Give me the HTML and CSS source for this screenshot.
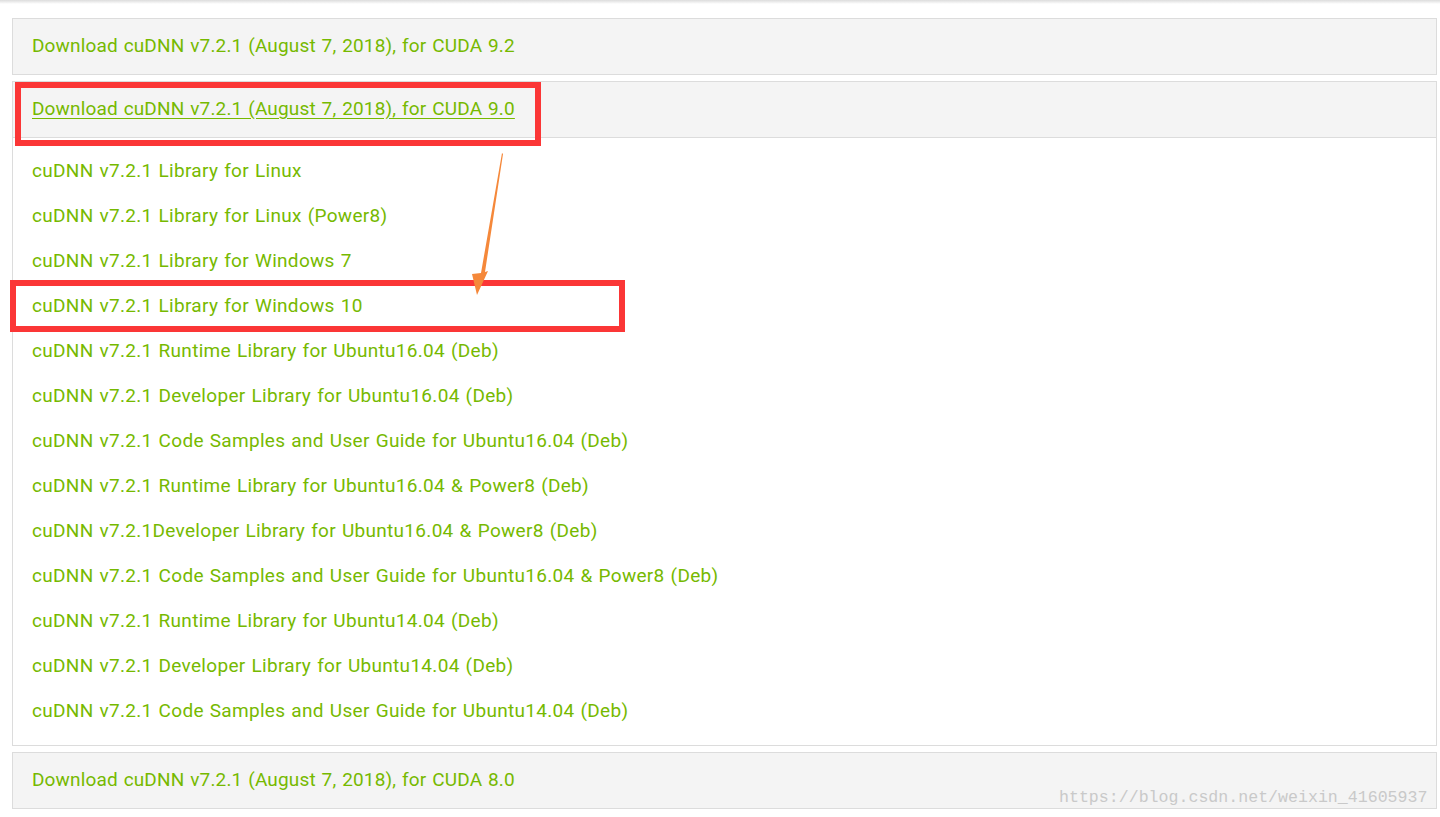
FILE: index.html
```html
<!DOCTYPE html>
<html>
<head>
<meta charset="utf-8">
<link rel="stylesheet" href="styles.css">
</head>
<body>
<div class="topshade"></div>
<div class="page">
  <div class="panel">
    <div class="panel-head"><a class="link">Download cuDNN v7.2.1 (August 7, 2018), for CUDA 9.2</a></div>
  </div>
  <div class="panel">
    <div class="panel-head open"><a class="link underline">Download cuDNN v7.2.1 (August 7, 2018), for CUDA 9.0</a></div>
    <ul class="panel-body">
      <li><a class="link">cuDNN v7.2.1 Library for Linux</a></li>
      <li><a class="link">cuDNN v7.2.1 Library for Linux (Power8)</a></li>
      <li><a class="link">cuDNN v7.2.1 Library for Windows 7</a></li>
      <li><a class="link">cuDNN v7.2.1 Library for Windows 10</a></li>
      <li><a class="link">cuDNN v7.2.1 Runtime Library for Ubuntu16.04 (Deb)</a></li>
      <li><a class="link">cuDNN v7.2.1 Developer Library for Ubuntu16.04 (Deb)</a></li>
      <li><a class="link">cuDNN v7.2.1 Code Samples and User Guide for Ubuntu16.04 (Deb)</a></li>
      <li><a class="link">cuDNN v7.2.1 Runtime Library for Ubuntu16.04 &amp; Power8 (Deb)</a></li>
      <li><a class="link">cuDNN v7.2.1Developer Library for Ubuntu16.04 &amp; Power8 (Deb)</a></li>
      <li><a class="link">cuDNN v7.2.1 Code Samples and User Guide for Ubuntu16.04 &amp; Power8 (Deb)</a></li>
      <li><a class="link">cuDNN v7.2.1 Runtime Library for Ubuntu14.04 (Deb)</a></li>
      <li><a class="link">cuDNN v7.2.1 Developer Library for Ubuntu14.04 (Deb)</a></li>
      <li><a class="link">cuDNN v7.2.1 Code Samples and User Guide for Ubuntu14.04 (Deb)</a></li>
    </ul>
  </div>
  <div class="panel">
    <div class="panel-head"><a class="link">Download cuDNN v7.2.1 (August 7, 2018), for CUDA 8.0</a></div>
  </div>
</div>
<div class="mark box-a"></div>
<div class="mark box-b"></div>
<svg class="arrow" width="60" height="160" viewBox="0 0 60 160">
  <polygon points="42,0 43,1 25,119 28,118 17,142 12,121 21,120" fill="#f5883a"/>
</svg>
<div class="watermark">https://blog.csdn.net/weixin_41605937</div>
</body>
</html>
```
FILE: styles.css
```css
html, body {
  margin: 0;
  padding: 0;
  background: #fff;
}
body {
  width: 1440px;
  height: 817px;
  overflow: hidden;
  position: relative;
  font-family: Roboto, "Liberation Sans", sans-serif;
}
.topshade {
  height: 4px;
  background: linear-gradient(#dcdcdc, #ffffff);
}
.page {
  padding: 14px 3px 0 12px;
  display: flex;
  flex-direction: column;
  gap: 6px;
}
.panel {
  border: 1px solid #dcdcdc;
  background: #fff;
}
.panel-head {
  background: #f4f4f4;
  height: 55px;
  padding: 0 19px;
  display: flex;
  align-items: center;
}
.panel-head > .link {
  position: relative;
  top: -1px;
  letter-spacing: 0.15px;
}
.panel-head.open {
  border-bottom: 1px solid #dcdcdc;
}
.link {
  color: #76b900;
  font-size: 19px;
  letter-spacing: 0.3px;
  word-spacing: 1px;
  text-decoration: none;
  white-space: nowrap;
}
.link.underline {
  text-decoration: underline;
  text-underline-offset: 3px;
}
.panel-body {
  list-style: none;
  margin: 0;
  padding: 10px 19px 12px;
}
.panel-body li {
  height: 45px;
  display: flex;
  align-items: center;
}
.mark {
  position: absolute;
  border: 6px solid #fb3636;
  box-sizing: border-box;
}
.box-a {
  left: 15px;
  top: 82px;
  width: 526px;
  height: 64px;
}
.box-b {
  left: 10px;
  top: 280px;
  width: 615px;
  height: 52px;
}
.arrow {
  position: absolute;
  left: 460px;
  top: 153px;
}
.watermark {
  position: absolute;
  left: 1059px;
  top: 788px;
  font-family: "Liberation Mono", monospace;
  font-size: 16.6px;
  color: #c9c9c9;
}
```
